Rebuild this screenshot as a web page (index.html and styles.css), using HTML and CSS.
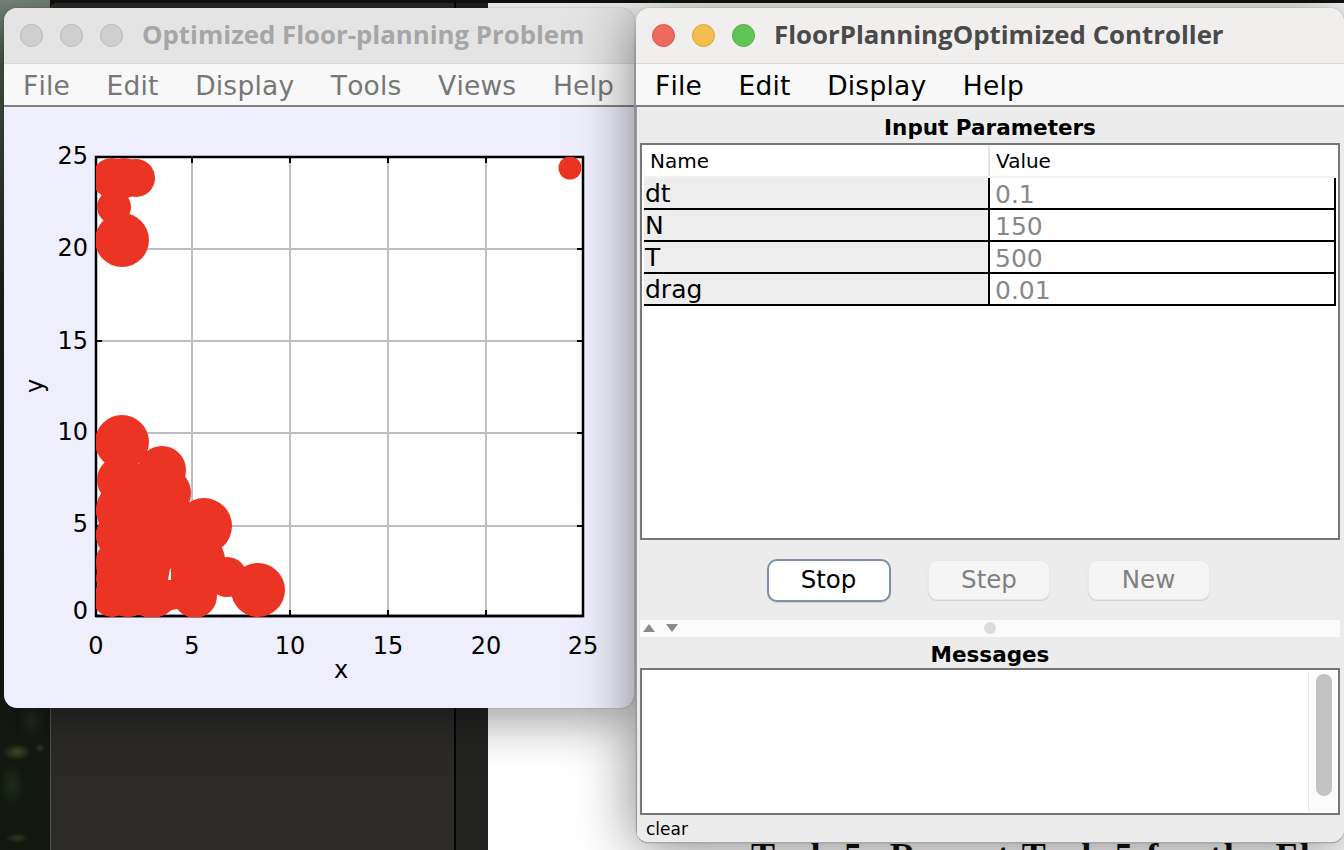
FILE: index.html
```html
<!DOCTYPE html>
<html lang="en">
<head>
    <meta charset="UTF-8">
    <meta name="viewport" content="width=device-width, initial-scale=1.0">
    <title>FloorPlanningOptimized Controller</title>
    <link rel="stylesheet" href="styles.css">
</head>
<body>
    <div class="desktop">
        <div class="wallpaper"></div>
        <div class="editor-pane"></div>
        <div class="editor-side"></div>
        <div class="document">
            <p class="document-text">Task 5: Repeat Task 5 for the Floo</p>
        </div>

        <!-- plot window -->
        <div class="window plot-window">
            <div class="titlebar">
                <span class="light"></span>
                <span class="light"></span>
                <span class="light"></span>
                <span class="title">Optimized Floor-planning Problem</span>
            </div>
            <div class="menubar">
                <span>File</span>
                <span>Edit</span>
                <span>Display</span>
                <span>Tools</span>
                <span>Views</span>
                <span>Help</span>
            </div>
            <svg class="plot" viewBox="4 107 630 601">
                <defs>
                    <clipPath id="axes-clip">
                        <rect x="96" y="157" width="487" height="460"></rect>
                    </clipPath>
                </defs>
                <rect x="96" y="157" width="487" height="459" fill="#fff"></rect>
                <g class="grid">
                    <path d="M192 157V616M290 157V616M388 157V616M486 157V616"></path>
                    <path d="M96 249H583M96 341H583M96 433H583M96 526H583"></path>
                </g>
                <g class="ticks">
                    <path d="M192 157v6M290 157v6M388 157v6M486 157v6M192 616v-6M290 616v-6M388 616v-6M486 616v-6"></path>
                    <path d="M96 249h6M96 341h6M96 433h6M96 526h6M583 249h-6M583 341h-6M583 433h-6M583 526h-6"></path>
                </g>
                <path class="frame" d="M96 157H583V616H96Z"></path>
                <path class="frame" d="M96 616H583"></path>
                <g class="dots" clip-path="url(#axes-clip)">
                    <circle cx="570" cy="168" r="11.5"></circle>
                    <circle cx="112" cy="178" r="20"></circle>
                    <circle cx="124" cy="178" r="20"></circle>
                    <circle cx="136" cy="178" r="19"></circle>
                    <circle cx="114" cy="207" r="17"></circle>
                    <circle cx="122" cy="240" r="27"></circle>
                    <circle cx="122" cy="442" r="27"></circle>
                    <circle cx="162" cy="470" r="24"></circle>
                    <circle cx="121" cy="480" r="24"></circle>
                    <circle cx="165" cy="493" r="26"></circle>
                    <circle cx="126" cy="510" r="30"></circle>
                    <circle cx="165" cy="522" r="30"></circle>
                    <circle cx="204" cy="526" r="28"></circle>
                    <circle cx="122" cy="535" r="26"></circle>
                    <circle cx="124" cy="565" r="28"></circle>
                    <circle cx="155" cy="555" r="26"></circle>
                    <circle cx="198" cy="560" r="27"></circle>
                    <circle cx="227" cy="577" r="20"></circle>
                    <circle cx="195" cy="596" r="22"></circle>
                    <circle cx="258" cy="590" r="27"></circle>
                    <circle cx="152" cy="590" r="28"></circle>
                    <circle cx="128" cy="590" r="27"></circle>
                    <circle cx="112" cy="598" r="19"></circle>
                    <circle cx="172" cy="560" r="20"></circle>
                    <circle cx="170" cy="590" r="20"></circle>
                    <circle cx="114" cy="510" r="18"></circle>
                    <circle cx="114" cy="535" r="18"></circle>
                    <circle cx="114" cy="560" r="18"></circle>
                    <circle cx="114" cy="578" r="18"></circle>
                </g>
                <path class="gap" d="M170 569L171 569L171 580L168 580Z"></path>
                <g class="tick-labels x-labels">
                    <text x="96" y="654">0</text>
                    <text x="192" y="654">5</text>
                    <text x="290" y="654">10</text>
                    <text x="388" y="654">15</text>
                    <text x="486" y="654">20</text>
                    <text x="583" y="654">25</text>
                </g>
                <g class="tick-labels y-labels">
                    <text x="88" y="164">25</text>
                    <text x="88" y="256">20</text>
                    <text x="88" y="349">15</text>
                    <text x="88" y="440">10</text>
                    <text x="88" y="532">5</text>
                    <text x="88" y="619">0</text>
                </g>
                <text class="axis-name" x="341" y="678">x</text>
                <text class="axis-name" transform="translate(43 386) rotate(-90)">y</text>
            </svg>
        </div>

        <!-- controller window -->
        <div class="window control-window">
            <div class="titlebar">
                <span class="light red"></span>
                <span class="light yellow"></span>
                <span class="light green"></span>
                <span class="title">FloorPlanningOptimized Controller</span>
            </div>
            <div class="menubar">
                <span>File</span>
                <span>Edit</span>
                <span>Display</span>
                <span>Help</span>
            </div>
            <div class="panel">
                <div class="section-title">Input Parameters</div>
                <div class="table-box">
                    <table class="params">
                        <thead>
                            <tr><th>Name</th><th>Value</th></tr>
                        </thead>
                        <tbody>
                            <tr><td>dt</td><td>0.1</td></tr>
                            <tr><td>N</td><td>150</td></tr>
                            <tr><td>T</td><td>500</td></tr>
                            <tr><td>drag</td><td>0.01</td></tr>
                        </tbody>
                    </table>
                </div>
                <div class="buttons">
                    <button class="btn btn-active">Stop</button>
                    <button class="btn">Step</button>
                    <button class="btn">New</button>
                </div>
                <div class="divider">
                    <svg class="arrows" width="40" height="12" viewBox="0 0 40 12">
                        <path d="M1 10L7 2L13 10Z"></path>
                        <path d="M24 2H36L30 10Z"></path>
                    </svg>
                    <span class="grip"></span>
                </div>
                <div class="section-title messages-title">Messages</div>
                <div class="messages-box">
                    <div class="scrolltrack"><div class="scrollthumb"></div></div>
                </div>
                <div class="clear-row">clear</div>
            </div>
        </div>
    </div>
</body>
</html>
```

FILE: styles.css
```css
html, body {
    margin: 0;
    padding: 0;
}

body {
    width: 1344px;
    height: 850px;
    overflow: hidden;
    font-family: "DejaVu Sans", sans-serif;
}

.desktop {
    position: relative;
    width: 1344px;
    height: 850px;
    overflow: hidden;
    background: #0f130d;
}

.wallpaper {
    position: absolute;
    left: 0;
    top: 0;
    width: 50px;
    height: 850px;
    background:
        radial-gradient(ellipse 14px 8px at 17px 752px, #434a26 0, transparent 100%),
        radial-gradient(circle at 40px 748px, #33382a 0, transparent 5px),
        radial-gradient(ellipse 12px 5px at 17px 838px, #33351f 0, transparent 100%),
        radial-gradient(ellipse 12px 22px at 12px 785px, #1c2c18 0, transparent 100%),
        radial-gradient(ellipse 14px 20px at 32px 720px, #232b24 0, transparent 100%),
        linear-gradient(#77857a 0, #4d5a4c 60px, #1a221a 300px, #12180f 850px);
}

.editor-pane {
    position: absolute;
    left: 50px;
    top: 3px;
    width: 406px;
    height: 847px;
    background: #2b2a28;
    border-left: 1px solid #55544f;
    border-right: 2px solid #050505;
    border-radius: 8px 0 0 0;
    box-sizing: border-box;
}

.editor-side {
    position: absolute;
    left: 456px;
    top: 3px;
    width: 32px;
    height: 847px;
    background: #232322;
}

.document {
    position: absolute;
    left: 488px;
    top: 3px;
    width: 856px;
    height: 847px;
    background: #fff;
}

.document-text {
    position: absolute;
    left: 263px;
    top: 832px;
    margin: 0;
    font-family: "Liberation Serif", serif;
    font-size: 36px;
    font-weight: 700;
    color: #111;
    letter-spacing: 2.25px;
    white-space: nowrap;
}

.window {
    position: absolute;
    display: flex;
    flex-direction: column;
    overflow: hidden;
    border-radius: 13px;
}

.plot-window {
    left: 4px;
    top: 8px;
    width: 630px;
    height: 700px;
    background: #eeeefc;
    box-shadow: 0 12px 50px rgba(0, 0, 0, 0.4), 0 0 1px rgba(0, 0, 0, 0.6);
}

.control-window {
    left: 636px;
    top: 8px;
    width: 708px;
    height: 835px;
    box-sizing: border-box;
    background: #ececec;
    border-bottom: 1px solid #a8a8a8;
    box-shadow: 0 4px 60px rgba(0, 0, 0, 0.5), 0 0 1px rgba(0, 0, 0, 0.6);
}

.titlebar {
    display: flex;
    align-items: center;
    flex: 0 0 56px;
    padding-left: 16px;
    box-sizing: border-box;
    background: #e4e4e4;
    border-bottom: 1px solid #d8d8d8;
}

.control-window .titlebar {
    background: #f0efee;
}

.light {
    width: 23px;
    height: 23px;
    margin-right: 17px;
    border-radius: 50%;
    box-sizing: border-box;
    background: #cfcfcf;
    border: 1px solid #b8b8b8;
}

.light.red {
    background: #ee6a5f;
    border-color: #d9574d;
}

.light.yellow {
    background: #f5bd4f;
    border-color: #dea33a;
}

.light.green {
    background: #61c554;
    border-color: #52ad47;
}

.title {
    margin-left: 2px;
    padding-bottom: 4px;
    font-family: "Open Sans", sans-serif;
    font-size: 25.8px;
    font-weight: 700;
    color: #a6a6a6;
    white-space: nowrap;
}

.control-window .title {
    color: #4a4a4a;
}

.menubar {
    display: flex;
    gap: 36.5px;
    flex: 0 0 43px;
    align-items: center;
    padding: 2px 0 0 19px;
    box-sizing: border-box;
    background: #f8f8f8;
    border-bottom: 2px solid #808080;
    font-size: 26.5px;
    font-kerning: none;
    letter-spacing: 0.2px;
    color: #777;
}

.control-window .menubar {
    color: #000;
}

.plot {
    display: block;
    width: 630px;
    height: 601px;
}

.grid path {
    fill: none;
    stroke: #bebebe;
    stroke-width: 2;
}

.ticks path {
    fill: none;
    stroke: #000;
    stroke-width: 2;
}

.frame {
    fill: none;
    stroke: #000;
    stroke-width: 2.5;
}

.dots circle {
    fill: #ec3424;
}

.gap {
    fill: #fff;
}

.tick-labels text, .axis-name {
    font-family: "DejaVu Sans", sans-serif;
    font-size: 24px;
    fill: #000;
}

.x-labels text, .axis-name {
    text-anchor: middle;
}

.y-labels text {
    text-anchor: end;
}

.panel {
    display: flex;
    flex-direction: column;
    flex: 1;
    padding: 0 4px 0 3px;
    border-left: 1px solid #999;
    background: #ececec;
}

.section-title {
    flex: 0 0 36px;
    min-height: 0;
    line-height: 41px;
    text-align: center;
    font-size: 21.5px;
    font-weight: 700;
    color: #000;
}

.table-box {
    flex: 0 0 397px;
    padding: 0 2px 0 2px;
    box-sizing: border-box;
    background: #fff;
    border: 2px solid #777;
}

.params {
    width: 692px;
    table-layout: fixed;
    border-collapse: collapse;
}

.params th {
    height: 31px;
    padding: 0 0 0 6px;
    text-align: left;
    font-size: 20px;
    font-weight: 400;
    color: #000;
    border-bottom: 2px solid #f2f2f2;
}

.params th + th {
    border-left: 2px solid #e4e4e4;
}

.params td {
    height: 32px;
    padding: 1px 0 0 1px;
    box-sizing: border-box;
    font-size: 25px;
    line-height: 29px;
    border-bottom: 2px solid #000;
    color: #000;
    background: #ededed;
    overflow: hidden;
}

.params td + td {
    padding: 4px 0 0 5px;
    line-height: 26px;
    border-left: 2px solid #000;
    background: #fff;
    color: #888;
    border-right: 2px solid #000;
}

.params th:first-child {
    width: 338px;
}

.buttons {
    display: flex;
    flex: 0 0 80px;
    align-items: center;
    justify-content: center;
    gap: 37.5px;
    padding-right: 4px;
}

.btn {
    width: 122px;
    height: 40px;
    padding: 0 0 2px;
    font-family: "DejaVu Sans", sans-serif;
    font-size: 24.5px;
    color: #808080;
    background: #f5f5f5;
    border: 1px solid #e8e8e8;
    border-radius: 9px;
    box-shadow: 0 1px 1px rgba(0, 0, 0, 0.12);
}

.btn-active {
    width: 124px;
    height: 43px;
    color: #000;
    background: #fff;
    border: 2px solid #7f8fa9;
    border-radius: 10px;
}

.divider {
    position: relative;
    flex: 0 0 17px;
    background: #fbfbfb;
}

.arrows {
    position: absolute;
    left: 2px;
    top: 2px;
}

.arrows path {
    fill: #8a8a8a;
}

.grip {
    position: absolute;
    left: 344px;
    top: 2px;
    width: 12px;
    height: 12px;
    border-radius: 50%;
    background: #dcdcdc;
}

.messages-title {
    flex: 0 0 31px;
    line-height: 35px;
}

.messages-box {
    display: flex;
    justify-content: flex-end;
    flex: 0 0 147px;
    box-sizing: border-box;
    padding: 2px;
    background: #fff;
    border: 2px solid #777;
}

.scrolltrack {
    width: 28px;
    padding: 2px 0 0 7px;
    box-sizing: border-box;
    background: #fbfbfb;
    border-left: 1px solid #e8e8e8;
}

.scrollthumb {
    width: 16px;
    height: 122px;
    border-radius: 8px;
    background: #c2c2c2;
}

.clear-row {
    padding: 4px 0 0 6px;
    font-size: 17px;
    color: #000;
}
```
